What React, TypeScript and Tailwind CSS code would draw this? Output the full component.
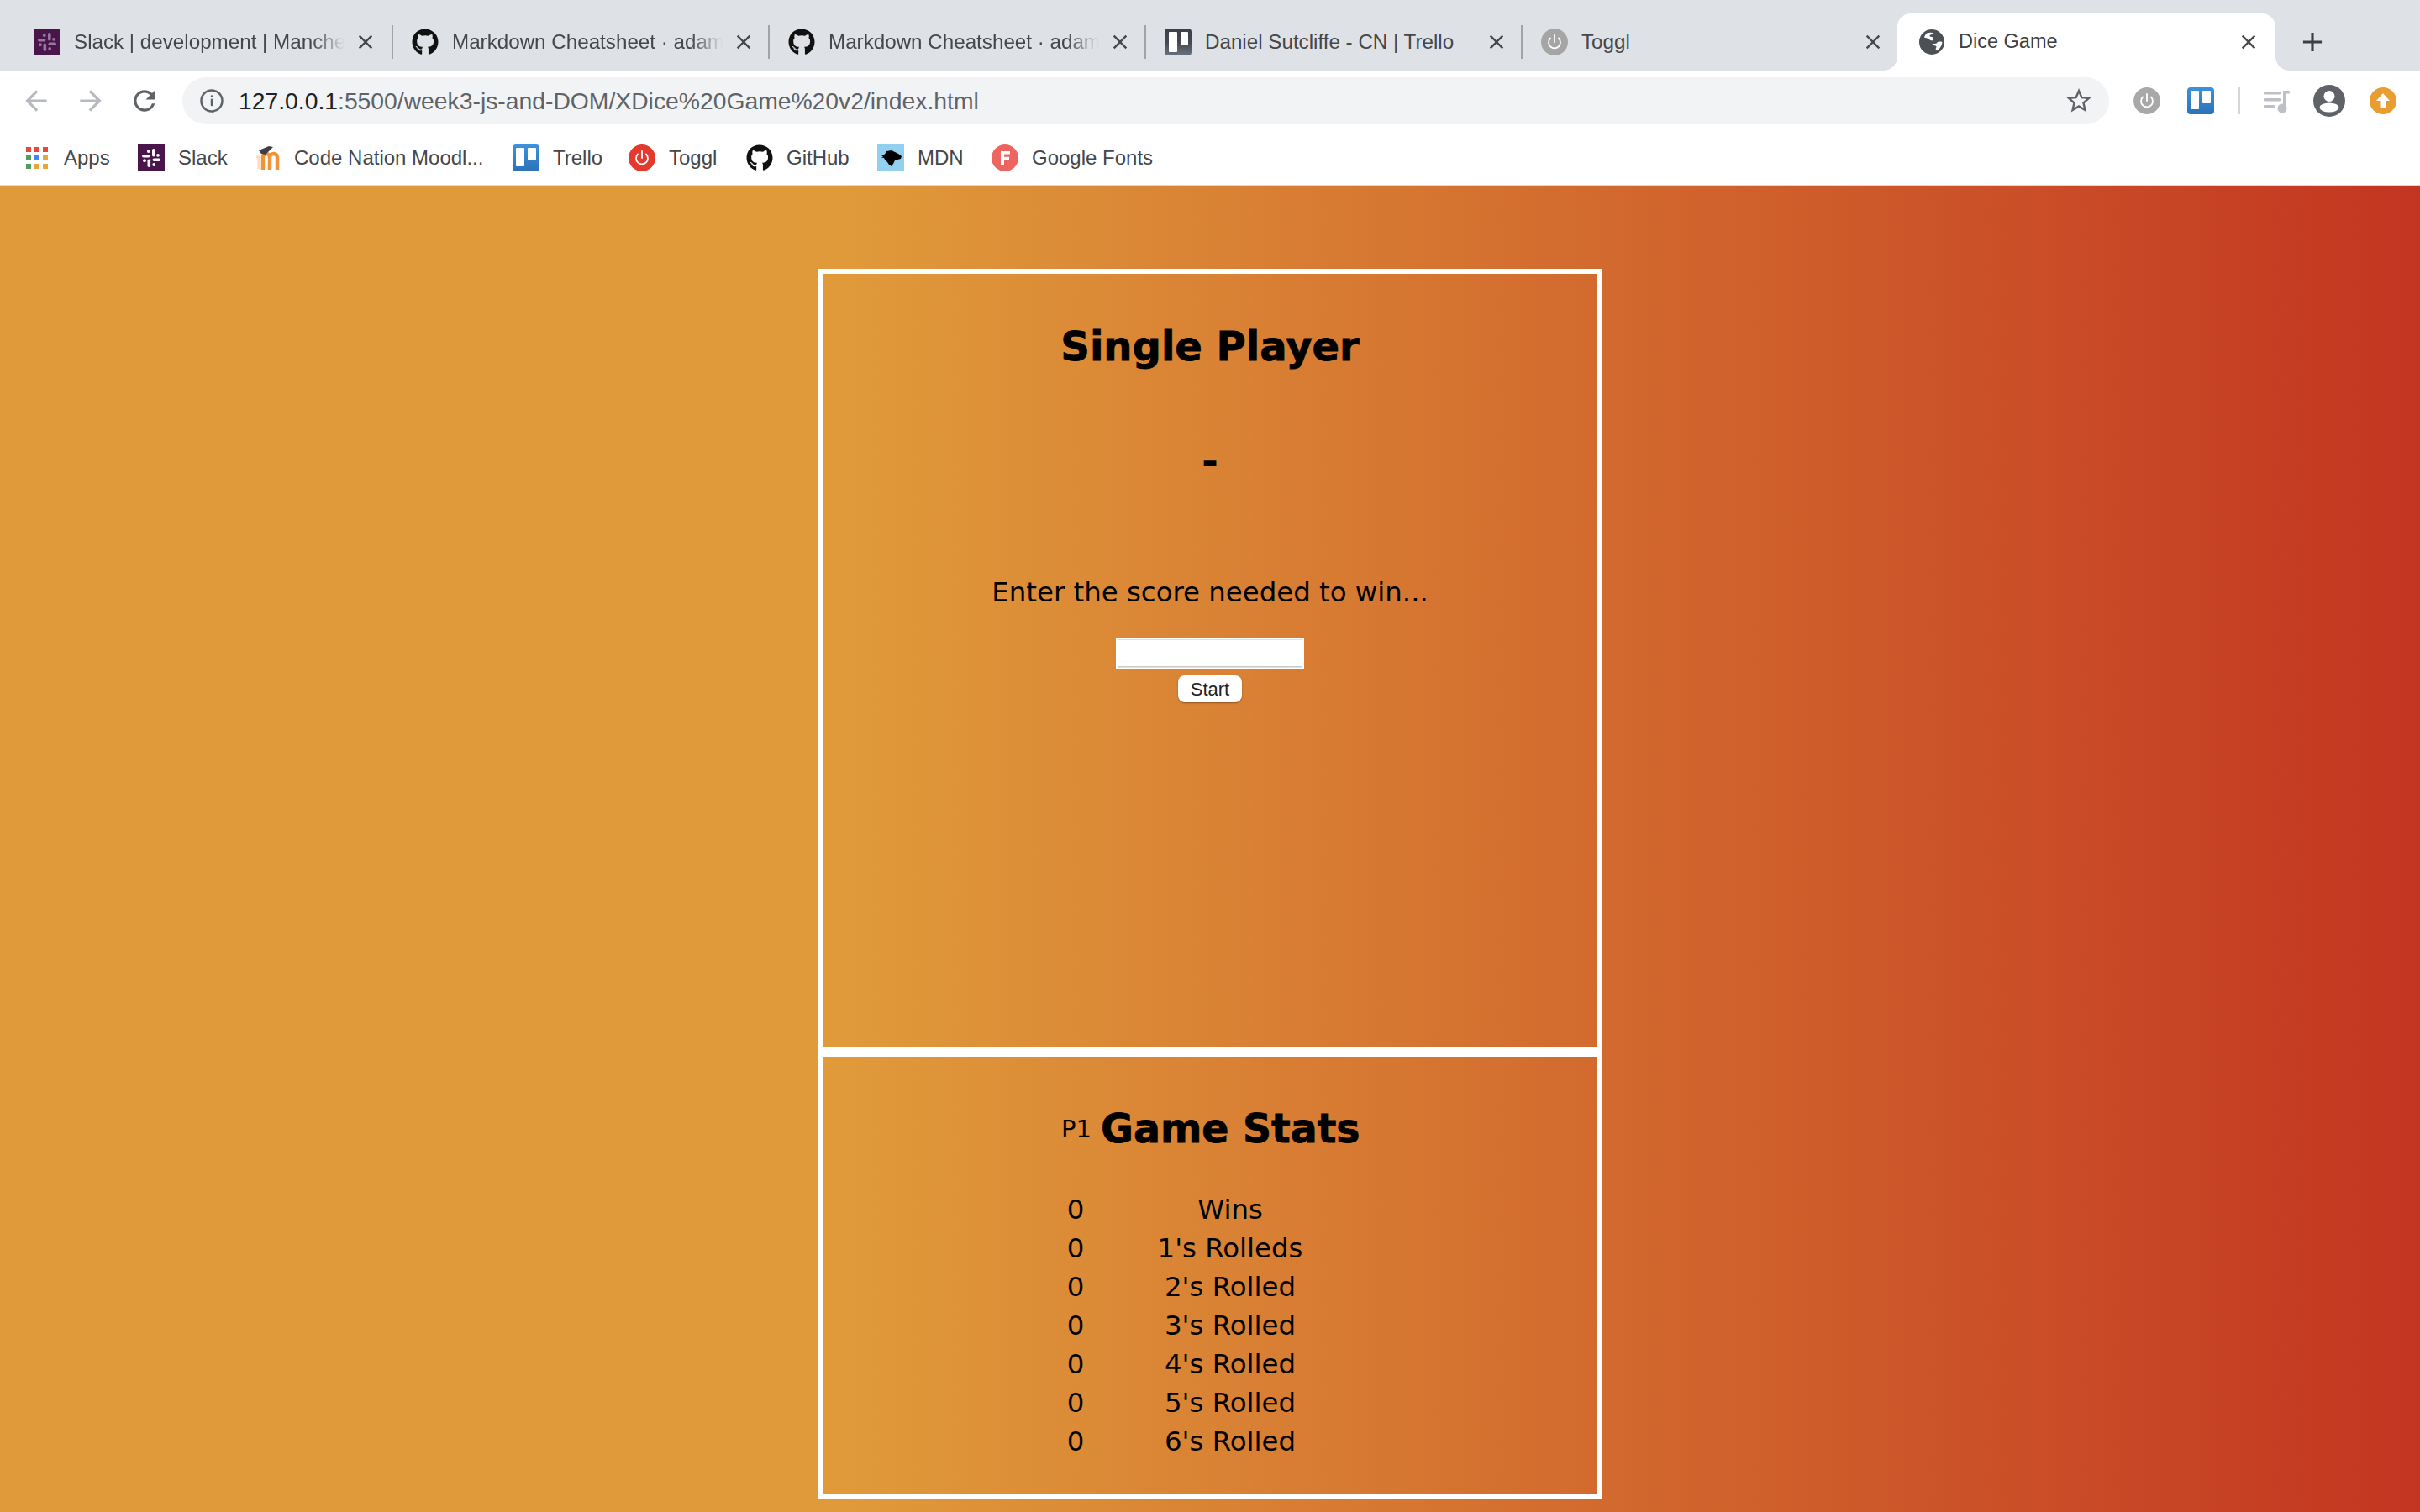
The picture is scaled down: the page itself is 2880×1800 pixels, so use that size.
import { FaGithub } from "react-icons/fa";

const ui = "font-['Liberation_Sans',Arial,sans-serif]";
const game = "font-['DejaVu_Sans',Verdana,sans-serif]";

const SlackIcon = ({ dim = false }: { dim?: boolean }) => (
  <svg width="32" height="32" viewBox="0 0 32 32" className="shrink-0">
    <rect width="32" height="32" fill="#4a154b" />
    <g fill={dim ? "#96799a" : "#ffffff"}>
      <rect x="5" y="12" width="9.5" height="3.6" rx="1.8" />
      <circle cx="12.8" cy="8" r="1.9" />
      <rect x="17" y="5" width="3.6" height="9.5" rx="1.8" />
      <circle cx="24" cy="12.8" r="1.9" />
      <rect x="17.5" y="16.5" width="9.5" height="3.6" rx="1.8" />
      <circle cx="19.2" cy="24" r="1.9" />
      <rect x="11.5" y="17.5" width="3.6" height="9.5" rx="1.8" />
      <circle cx="8" cy="19.2" r="1.9" />
    </g>
  </svg>
);

const TrelloIcon = () => (
  <svg width="32" height="32" viewBox="0 0 32 32" className="shrink-0">
    <defs>
      <linearGradient id="trello" x1="0" y1="0" x2="0" y2="1">
        <stop offset="0" stopColor="#3d92dc" />
        <stop offset="1" stopColor="#2c73b8" />
      </linearGradient>
    </defs>
    <rect width="32" height="32" rx="4" fill="url(#trello)" />
    <rect x="4" y="4" width="10" height="22" rx="1" fill="#fff" />
    <rect x="18" y="4" width="10" height="15" rx="1" fill="#fff" />
  </svg>
);

const TrelloTabIcon = () => (
  <svg width="32" height="32" viewBox="0 0 32 32" className="shrink-0">
    <defs>
      <linearGradient id="trellotab" x1="0" y1="0" x2="0" y2="1">
        <stop offset="0" stopColor="#3d4046" />
        <stop offset="0.5" stopColor="#44484f" />
        <stop offset="1" stopColor="#6a7380" />
      </linearGradient>
    </defs>
    <rect width="32" height="32" rx="4" fill="url(#trellotab)" />
    <rect x="5" y="4" width="10" height="24" rx="1" fill="#fff" />
    <rect x="19" y="4" width="9" height="16" rx="1" fill="#fff" />
  </svg>
);

const PowerIcon = ({ bg, stroke }: { bg: string; stroke: string }) => (
  <svg width="32" height="32" viewBox="0 0 32 32" className="shrink-0">
    <circle cx="16" cy="16" r="16" fill={bg} />
    <path d="M11 11.5a7 7 0 1 0 10 0" fill="none" stroke={stroke} strokeWidth="1.8" strokeLinecap="round" />
    <path d="M16 8v8" fill="none" stroke={stroke} strokeWidth="1.8" strokeLinecap="round" />
  </svg>
);

const GlobeIcon = () => (
  <svg width="32" height="32" viewBox="0 0 32 32" className="shrink-0">
    <circle cx="16" cy="16" r="15" fill="#4d5156" />
    <path d="M10 5.500c3-1 6-1 8-.3-.5 2-3.500 1.500-4.500 3-.6 1 1 1.600 2.500 1.900 1.800.3 2.700 2 1.800 3.300-1.200 1.600-4 .7-5.300-.700-1.800-2-4-1.200-5.500-2.200C7.700 8.700 8.700 6.500 10 5.500z" fill="#fff" />
    <path d="M22 17c1.600-1.700 4-1.700 6.500-1-.3 3.500-2.300 7.300-5.300 9.800-1.600 1-2.800-.3-2.500-1.800.3-1.700 1.500-2 .3-3.200-.6-.6-4-.5-4.300-2 .2-1.300 3.800-.2 5.800-1.800z" fill="#fff" />
  </svg>
);

const MoodleIcon = () => (
  <svg width="34" height="32" viewBox="0 0 34 32" className="shrink-0">
    <path d="M10 30V15c0-2.500 2-4 4-4s4 1.500 4 4v15M18 15c0-2.500 2-4 4.500-4s4.500 1.500 4.500 4v15" fill="none" stroke="#ef9537" strokeWidth="4.500" />
    <path d="M2 15h3v14" fill="none" stroke="#fbdcc0" strokeWidth="3" />
    <path d="M5 7L17 2 22 3 13 12 8 11z" fill="#3f3f41" />
  </svg>
);

const MdnIcon = () => (
  <svg width="32" height="32" viewBox="0 0 32 32" className="shrink-0">
    <rect width="32" height="32" fill="#93d0f0" />
    <path d="M5 13l4-1.500L11 8l6-1 4 2 4 2 4 3-1 3-4 1-3 1-2 4-2 3-3-2-2-3-3-3-1-2-3-.5 2-1z" fill="#000" />
  </svg>
);

const FontsIcon = () => (
  <svg width="32" height="32" viewBox="0 0 32 32" className="shrink-0">
    <circle cx="16" cy="16" r="16" fill="#ec6560" />
    <path d="M11 8h11v3.400h-7v3.400h6v3.400h-6V25h-4z" fill="#fff" />
  </svg>
);

const CloseIcon = () => (
  <svg width="28" height="28" viewBox="0 0 24 24" fill="#45474a" className="shrink-0">
    <path d="M19 6.410L17.590 5 12 10.590 6.410 5 5 6.410 10.590 12 5 17.590 6.410 19 12 13.410 17.590 19 19 17.590 13.410 12z" />
  </svg>
);

const tabs = [
  { title: "Slack | development | Manche", icon: <SlackIcon dim />, w: "w-[448px] pl-[20px]", sep: true, fade: true },
  { title: "Markdown Cheatsheet · adam", icon: <FaGithub size={32} color="#111" className="shrink-0" />, w: "w-[448px] pl-[22px]", sep: true, fade: true },
  { title: "Markdown Cheatsheet · adam", icon: <FaGithub size={32} color="#111" className="shrink-0" />, w: "w-[448px] pl-[22px]", sep: true, fade: true },
  { title: "Daniel Sutcliffe - CN | Trello", icon: <TrelloTabIcon />, w: "w-[448px] pl-[22px]", sep: true, fade: false },
  { title: "Toggl", icon: <PowerIcon bg="#a5a5a5" stroke="#ffffff" />, w: "w-[446px] pl-[22px]", sep: false, fade: false },
];

const bookmarks = [
  { label: "Slack", icon: <SlackIcon />, w: "w-[139px]", gap: "gap-4" },
  { label: "Code Nation Moodl...", icon: <MoodleIcon />, w: "w-[307px]", gap: "gap-[13px]" },
  { label: "Trello", icon: <TrelloIcon />, w: "w-[138px]", gap: "gap-4" },
  { label: "Toggl", icon: <PowerIcon bg="#e43a2e" stroke="#ffffff" />, w: "w-[140px]", gap: "gap-4" },
  { label: "GitHub", icon: <FaGithub size={32} color="#111" className="shrink-0" />, w: "w-[156px]", gap: "gap-4" },
  { label: "MDN", icon: <MdnIcon />, w: "w-[136px]", gap: "gap-4" },
  { label: "Google Fonts", icon: <FontsIcon />, w: "w-[240px]", gap: "gap-4" },
];

const appDots = [
  "bg-[#e8453c]", "bg-[#e8453c]", "bg-[#e8453c]",
  "bg-[#4f9d5f]", "bg-[#4285f4]", "bg-[#e9a53a]",
  "bg-[#4f9d5f]", "bg-[#e9a53a]", "bg-[#e9a53a]",
];

const stats = ["Wins", "1's Rolleds", "2's Rolled", "3's Rolled", "4's Rolled", "5's Rolled", "6's Rolled"];

export default function App() {
  return (
    <div className={`flex h-screen flex-col overflow-hidden bg-white ${ui}`}>
      {/* tab strip */}
      <div className="flex h-[84px] shrink-0 items-end bg-[#dee1e6] pl-[20px]">
        {tabs.map((tab, i) => (
          <div key={i} className={`flex h-[68px] shrink-0 items-center ${tab.w}`}>
            {tab.icon}
            <div
              className={`ml-4 w-[322px] whitespace-nowrap text-[24.2px] text-[#45474a] ${
                tab.fade ? "[mask-image:linear-gradient(to_right,black_88%,transparent)]" : ""
              }`}
            >
              {tab.title}
            </div>
            <div className="ml-[10px] flex w-[30px] justify-center">
              <CloseIcon />
            </div>
            {tab.sep && <div className="ml-auto h-10 w-0.5 bg-[#a0a3a8]" />}
          </div>
        ))}
        <div className="relative flex h-[68px] w-[450px] shrink-0 items-center rounded-t-2xl bg-white pl-[25px]">
          <div className="absolute bottom-0 left-[-16px] h-4 w-4 bg-[radial-gradient(circle_at_0_0,#dee1e6_15.5px,#ffffff_16px)]" />
          <GlobeIcon />
          <div className="ml-4 text-[23.5px] text-[#3c4043]">Dice Game</div>
          <div className="ml-auto mr-[18px] flex">
            <CloseIcon />
          </div>
          <div className="absolute bottom-0 right-[-16px] h-4 w-4 bg-[radial-gradient(circle_at_100%_0,#dee1e6_15.5px,#ffffff_16px)]" />
        </div>
        <svg width="38" height="38" viewBox="0 0 24 24" fill="#3c4043" className="mb-[15px] ml-[25px]">
          <path d="M19 13h-6v6h-2v-6H5v-2h6V5h2v6h6v2z" />
        </svg>
      </div>

      {/* toolbar */}
      <div className="flex h-[64px] shrink-0 items-center bg-white pt-2">
        <div className="flex w-[217px] shrink-0 items-center pl-6">
          <svg width="38" height="38" viewBox="0 0 24 24" fill="#b6b9bd">
            <path d="M20 11H7.830l5.590-5.590L12 4l-8 8 8 8 1.410-1.410L7.830 13H20v-2z" />
          </svg>
          <svg width="38" height="38" viewBox="0 0 24 24" fill="#b6b9bd" className="ml-[27px]">
            <path d="M12 4l-1.410 1.410L16.170 11H4v2h12.170l-5.580 5.590L12 20l8-8z" />
          </svg>
          <svg width="38" height="38" viewBox="0 0 24 24" fill="#5f6368" className="ml-[26px]">
            <path d="M17.650 6.350A7.958 7.958 0 0 0 12 4c-4.420 0-7.990 3.580-7.990 8s3.570 8 7.990 8c3.730 0 6.840-2.550 7.730-6h-2.080A5.990 5.990 0 0 1 12 18c-3.310 0-6-2.690-6-6s2.690-6 6-6c1.660 0 3.140.690 4.220 1.780L13 11h7V4l-2.350 2.350z" />
          </svg>
        </div>
        <div className="flex h-14 w-[2293px] shrink-0 items-center rounded-[28px] bg-[#f1f3f4] pl-[20px] pr-[18px]">
          <svg width="30" height="30" viewBox="0 0 24 24" fill="none" stroke="#5f6368" strokeWidth="2" strokeLinecap="round">
            <circle cx="12" cy="12" r="10" />
            <path d="M12 11v5M12 7.600v.2" />
          </svg>
          <div className="ml-[17px] whitespace-nowrap text-[28.3px] text-[#5f6368]">
            <span className="text-[#202124]">127.0.0.1</span>:5500/week3-js-and-DOM/XDice%20Game%20v2/index.html
          </div>
          <svg width="36" height="36" viewBox="0 0 24 24" fill="#5f6368" className="ml-auto">
            <path d="M22 9.240l-7.190-.620L12 2 9.190 8.630 2 9.240l5.460 4.730L5.820 21 12 17.270 18.180 21l-1.630-7.030L22 9.240zM12 15.400l-3.760 2.270 1-4.280-3.320-2.880 4.380-.380L12 6.100l1.710 4.040 4.380.380-3.320 2.880 1 4.280L12 15.400z" />
          </svg>
        </div>
        <div className="ml-[24px] flex items-center">
          <div className="ml-[5px]">
            <PowerIcon bg="#a8a8a8" stroke="#ffffff" />
          </div>
          <div className="ml-[32px]">
            <TrelloIcon />
          </div>
          <div className="ml-[29px] h-8 w-0.5 bg-[#d4d6d9]" />
          <svg width="34" height="32" viewBox="0 0 34 32" className="ml-[26px]" fill="#bdc1c6">
            <rect x="2" y="5" width="20" height="3.500" rx="1" />
            <rect x="2" y="13" width="20" height="3.500" rx="1" />
            <rect x="2" y="21" width="13" height="3.500" rx="1" />
            <rect x="25" y="4" width="3.500" height="22" />
            <rect x="25" y="4" width="8" height="3.500" rx="1" />
            <circle cx="24" cy="25" r="5.500" />
          </svg>
          <svg width="38" height="38" viewBox="0 0 38 38" className="ml-[27px]">
            <circle cx="19" cy="19" r="19" fill="#5f6368" />
            <circle cx="19" cy="13.500" r="6.500" fill="#fff" />
            <ellipse cx="19" cy="27" rx="11.500" ry="5.500" fill="#fff" />
          </svg>
          <svg width="32" height="32" viewBox="0 0 32 32" className="ml-[29px]">
            <circle cx="16" cy="16" r="16" fill="#e89c32" />
            <path d="M16 7l8 9h-4.500v8h-7v-8H8z" fill="#fff" />
          </svg>
        </div>
      </div>

      {/* bookmarks */}
      <div className="flex h-[74px] shrink-0 items-center border-b-2 border-[#d9d9d9] bg-white pl-[31px] pt-2 text-[24px] text-[#45474a]">
        <div className="flex w-[133px] shrink-0 items-center">
          <div className="grid grid-cols-[6px_6px_6px] gap-[4px]">
            {appDots.map((dot, i) => (
              <div key={i} className={`h-[6px] w-[6px] ${dot}`} />
            ))}
          </div>
          <span className="ml-[19px]">Apps</span>
        </div>
        {bookmarks.map((b) => (
          <div key={b.label} className={`flex shrink-0 items-center ${b.gap} ${b.w}`}>
            {b.icon}
            <span>{b.label}</span>
          </div>
        ))}
      </div>

      {/* page */}
      <div className={`flex flex-1 flex-col items-center bg-[linear-gradient(to_right,#e09a3a_35%,#c33521_100%)] pt-[98px] text-black ${game}`}>
        <div className="flex h-[932px] w-[932px] shrink-0 flex-col items-center border-[6px] border-white">
          <h1 className="mt-[50px] text-[48px] font-bold leading-[72px] [-webkit-text-stroke:0.8px_black]">Single Player</h1>
          <div className="mt-[64px] text-[48px] font-bold leading-[72px]">-</div>
          <p className="mt-[97px] text-[32.4px] leading-[48px]">Enter the score needed to win...</p>
          <input
            type="text"
            className="mt-[30px] h-[38px] w-[224px] border-2 border-white bg-white shadow-[inset_0_0_0_1px_#e2e2e2,inset_0_-2px_0_#c8c8c8]"
          />
          <button className={`mt-[7px] h-8 w-[76px] rounded-lg bg-white text-[22px] text-[#222] shadow-[0_1px_2px_rgba(0,0,0,0.35)] ${ui}`}>
            Start
          </button>
        </div>
        <div className="flex h-[532px] w-[932px] shrink-0 flex-col items-center border-[6px] border-white pt-[50px]">
          <div className="grid grid-cols-[34px_306px] items-center gap-x-[14px]">
            <div className="text-[29px] leading-[42px]">P1</div>
            <div className="ml-[-1px] whitespace-nowrap text-[47.4px] font-bold leading-[72px] [-webkit-text-stroke:0.8px_black]">Game Stats</div>
            <div className="col-span-2 mb-[37px]" />
            {stats.map((s) => (
              <div key={s} className="col-span-2 grid grid-cols-subgrid text-center text-[32.4px] leading-[46px]">
                <div>0</div>
                <div>{s}</div>
              </div>
            ))}
          </div>
        </div>
      </div>
    </div>
  );
}
